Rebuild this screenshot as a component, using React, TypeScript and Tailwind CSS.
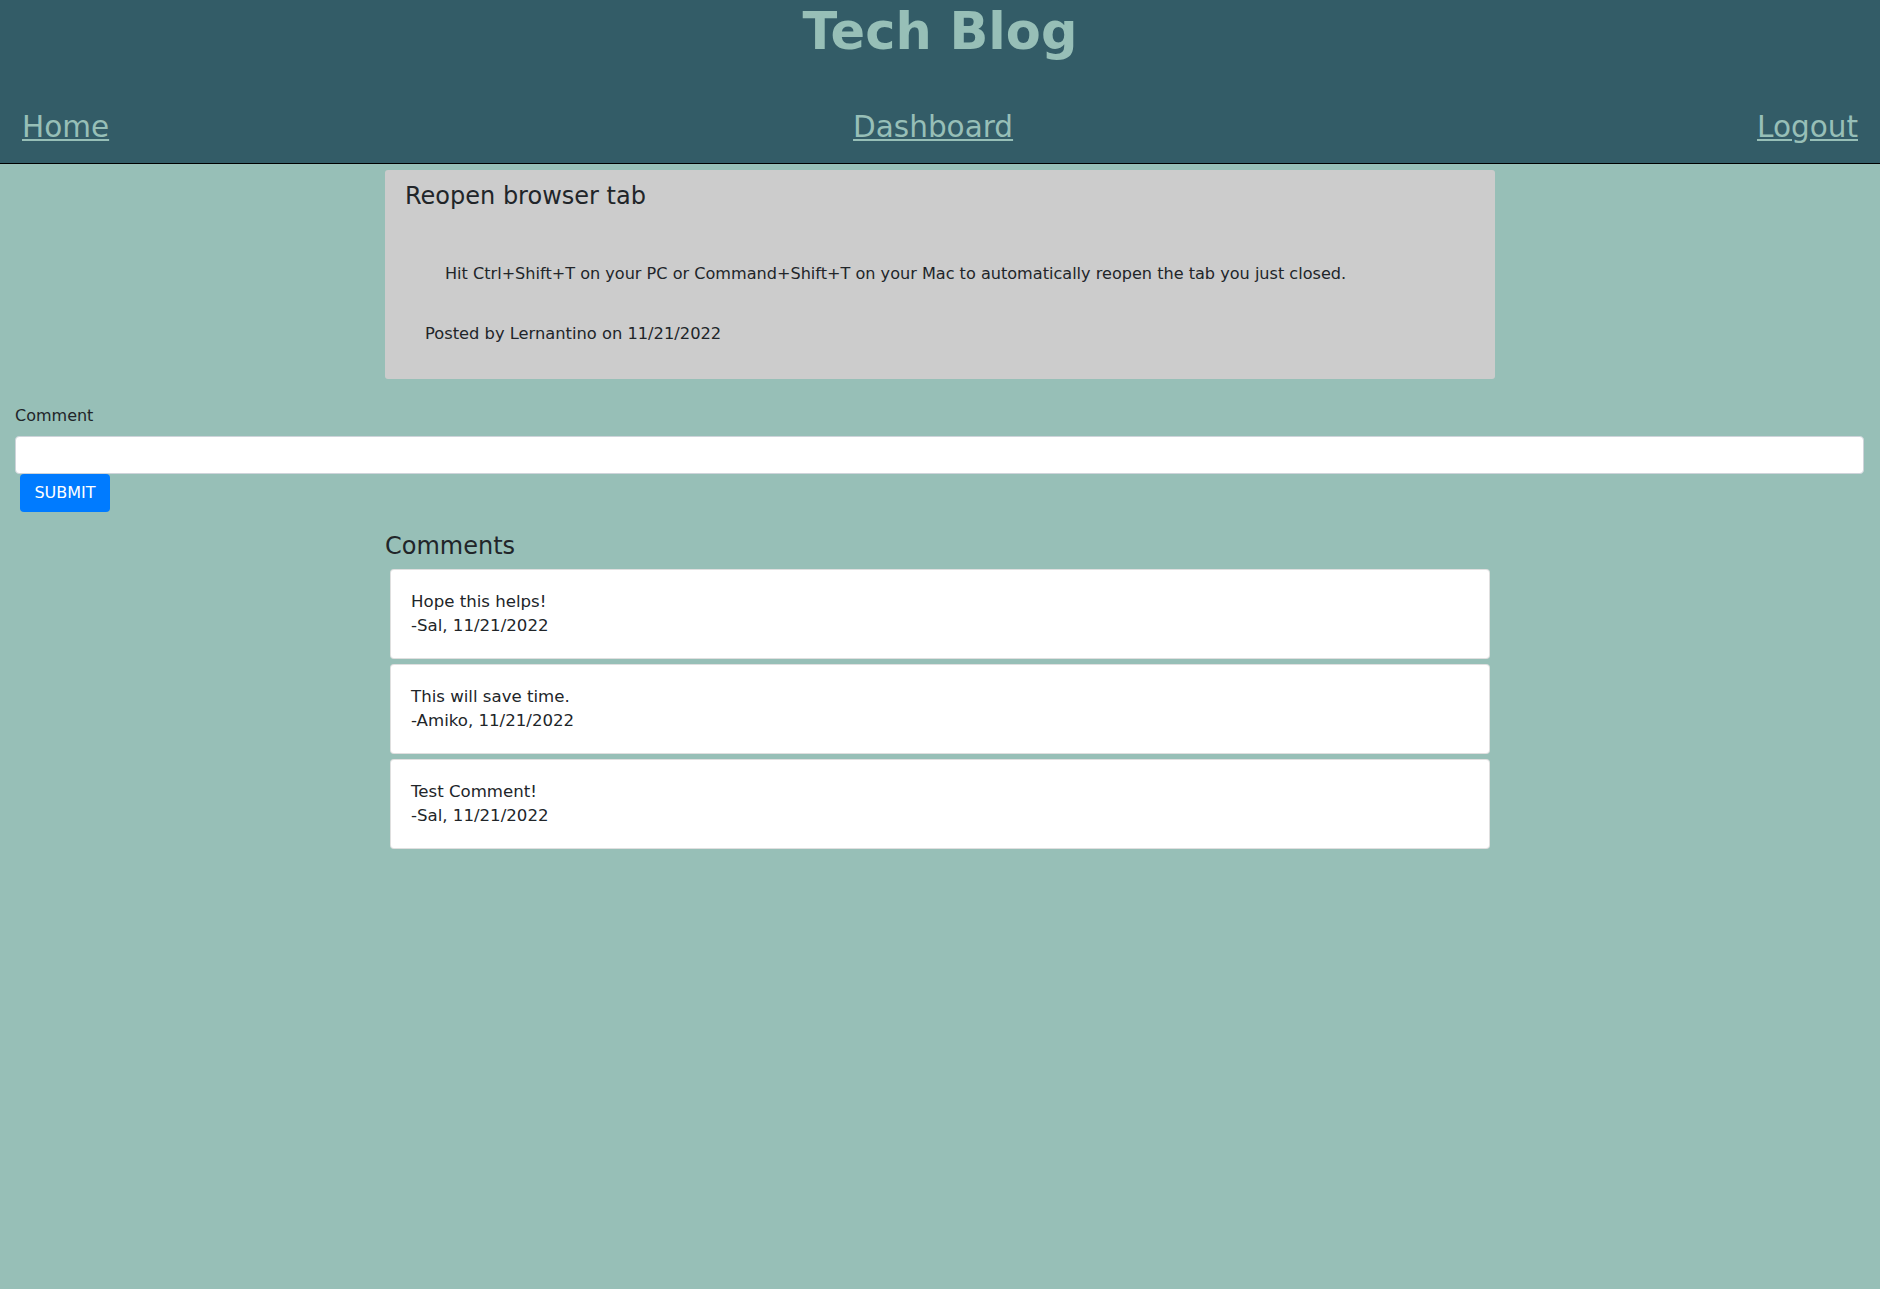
import React from "react";

const comments = [
  { text: "Hope this helps!", by: "-Sal, 11/21/2022" },
  { text: "This will save time.", by: "-Amiko, 11/21/2022" },
  { text: "Test Comment!", by: "-Sal, 11/21/2022" },
];

export default function App() {
  return (
    <div
      className="min-h-screen bg-[#97bfb7] text-[#212529]"
      style={{ fontFamily: '"DejaVu Sans", Verdana, sans-serif' }}
    >
      <header className="bg-[#335c67] border-b border-black">
        <h1 className="pt-[3px] text-center text-[51px] leading-[57.6px] font-bold text-[#97bfb7]">
          Tech Blog
        </h1>
        <nav className="mt-[44px] pb-[14px] px-[22px] flex justify-between text-[29.5px] leading-[44px] text-[#97bfb7]">
          <a href="#" className="underline">Home</a>
          <a href="#" className="underline">Dashboard</a>
          <a href="#" className="underline">Logout</a>
        </nav>
      </header>

      <main>
        <div className="mx-auto w-[1110px] mt-[6px] bg-[#cccccc] rounded-[3px] pt-[12px] pb-[33px] px-[20px]">
          <h4 className="text-[24px] leading-[28.8px]">Reopen browser tab</h4>
          <p className="mt-[52px] pl-[40px] text-[16.1px] leading-[24px]">
            Hit Ctrl+Shift+T on your PC or Command+Shift+T on your Mac to automatically reopen the tab you just closed.
          </p>
          <p className="mt-[36px] pl-[20px] text-[16.3px] leading-[24px]">
            Posted by Lernantino on 11/21/2022
          </p>
        </div>

        <form className="mt-[25px] px-[15px] flex flex-col">
          <label className="text-[16px] leading-[24px] mb-[8px]">Comment</label>
          <input
            type="text"
            className="h-[38px] w-[1849px] bg-white border border-[#ced4da] rounded-[4px] px-3 outline-none"
          />
          <button
            type="button"
            className="ml-[5px] self-start h-[38px] w-[90px] bg-[#007bff] text-white text-[16px] rounded-[4px]"
          >
            SUBMIT
          </button>
        </form>

        <section className="mx-auto w-[1110px] mt-[20px]">
          <h2 className="text-[24px] leading-[28.8px]">Comments</h2>
          <div className="mt-[8px] flex flex-col gap-[5px] px-[5px]">
            {comments.map((c, i) => (
              <div
                key={i}
                className="bg-white border border-[rgba(0,0,0,0.125)] rounded-[4px] p-[20px] text-[16.6px] leading-[24px]"
              >
                <div>{c.text}</div>
                <div>{c.by}</div>
              </div>
            ))}
          </div>
        </section>
      </main>
    </div>
  );
}
